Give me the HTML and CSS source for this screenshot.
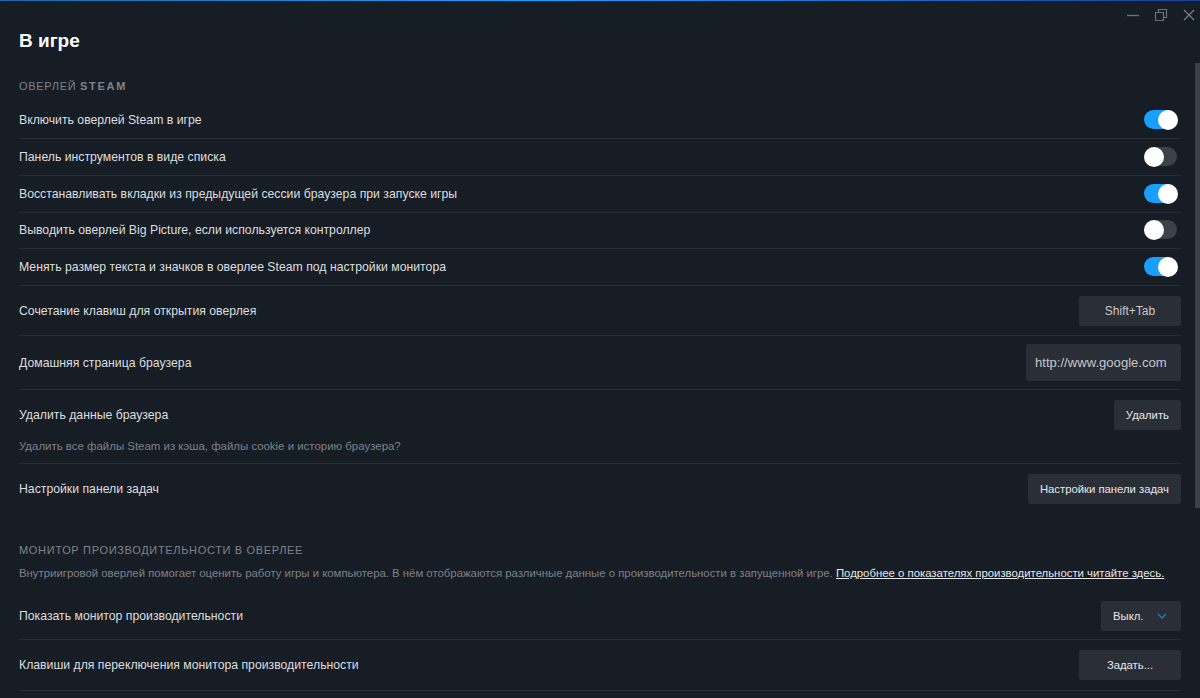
FILE: index.html
```html
<!DOCTYPE html>
<html lang="ru">
  <head>
    <meta charset="UTF-8" />
    <meta name="viewport" content="width=device-width, initial-scale=1.0" />
    <title>В игре</title>
    <link rel="stylesheet" href="styles.css">
  </head>
  <body>
    <div class="topLine"></div>
    <div class="windowButtons">
      <svg width="14" height="14" viewBox="0 0 14 14"><path d="M1 7.500h12" stroke="#6b7079" stroke-width="1.400" fill="none" /></svg>
      <svg width="14" height="14" viewBox="0 0 14 14"><path d="M1.500 4.500h8v8h-8zM4.500 4.500v-3h8v8h-3" stroke="#6b7079" stroke-width="1.200" fill="none" /></svg>
      <svg width="14" height="14" viewBox="0 0 14 14"><path d="M2 2l10 10M12 2l-10 10" stroke="#7b8088" stroke-width="1.200" fill="none" /></svg>
    </div>
    <div class="scrollThumb"></div>
    <div class="page">
      <h1 class="pageTitle">В игре</h1>

      <h2 class="sectionTitle">Оверлей <b>Steam</b></h2>
      <div class="row toggleRow">
        <p>Включить оверлей Steam в игре</p>
        <div class="toggle on"><span></span></div>
      </div>
      <div class="row toggleRow">
        <p>Панель инструментов в виде списка</p>
        <div class="toggle"><span></span></div>
      </div>
      <div class="row toggleRow">
        <p>Восстанавливать вкладки из предыдущей сессии браузера при запуске игры</p>
        <div class="toggle on"><span></span></div>
      </div>
      <div class="row toggleRow">
        <p>Выводить оверлей Big Picture, если используется контроллер</p>
        <div class="toggle"><span></span></div>
      </div>
      <div class="row toggleRow">
        <p>Менять размер текста и значков в оверлее Steam под настройки монитора</p>
        <div class="toggle on"><span></span></div>
      </div>
      <div class="row shortcutRow">
        <p>Сочетание клавиш для открытия оверлея</p>
        <div class="button wide">Shift+Tab</div>
      </div>
      <div class="row homeRow">
        <p>Домашняя страница браузера</p>
        <div class="urlField">http://www.google.com</div>
      </div>
      <div class="deleteRow">
        <div class="deleteTop">
          <p>Удалить данные браузера</p>
          <div class="button strong">Удалить</div>
        </div>
        <p class="hint">Удалить все файлы Steam из кэша, файлы cookie и историю браузера?</p>
      </div>
      <div class="row plainRow">
        <p>Настройки панели задач</p>
        <div class="button strong">Настройки панели задач</div>
      </div>

      <h2 class="sectionTitle second">Монитор производительности в оверлее</h2>
      <p class="hint intro">Внутриигровой оверлей помогает оценить работу игры и компьютера. В нём отображаются различные данные о производительности в запущенной игре. <a href="#">Подробнее о показателях производительности читайте здесь.</a></p>
      <div class="row monitorRow first">
        <p>Показать монитор производительности</p>
        <div class="button select strong">Выкл.
          <svg width="10" height="6" viewBox="0 0 10 6"><path d="M1 1l4 4 4-4" stroke="#1a7fc9" stroke-width="1.300" fill="none" /></svg>
        </div>
      </div>
      <div class="row monitorRow">
        <p>Клавиши для переключения монитора производительности</p>
        <div class="button wide strong">Задать...</div>
      </div>
    </div>
  </body>
</html>
```
FILE: styles.css
```css
html,
body {
  height: 698px;
  overflow: hidden;
}
body {
  margin: 0;
  background-color: #171d25;
  color: #dcdedf;
  font-family: "Liberation Sans", Arial, sans-serif;
  font-size: 12.25px;
}
p,
h1,
h2 {
  margin: 0;
}
.topLine {
  height: 1px;
  background: linear-gradient(to right, #1a6aa8, #1a9fff 45%, #1b3f9c);
}
.windowButtons {
  position: absolute;
  top: 8px;
  right: 4px;
  display: flex;
  gap: 14px;
}
.scrollThumb {
  position: absolute;
  top: 63px;
  right: 0;
  width: 5px;
  height: 445px;
  background-color: #3a3f48;
}
.page {
  padding: 0 19px;
}
.pageTitle {
  padding-top: 28px;
  font-size: 19px;
  line-height: 24px;
  color: #fff;
  font-weight: bold;
}
.sectionTitle {
  margin-top: 25px;
  margin-bottom: 8.25px;
  height: 16px;
  font-size: 11px;
  line-height: 16px;
  font-weight: normal;
  color: #7f8389;
  letter-spacing: 0.7px;
  text-transform: uppercase;
}
.sectionTitle b {
  letter-spacing: 1.7px;
}
.sectionTitle.second {
  margin-top: 29px;
  margin-bottom: 0;
  letter-spacing: 0.67px;
}
.row {
  box-sizing: border-box;
  display: flex;
  justify-content: space-between;
  align-items: center;
  border-bottom: 1px solid #2a2f37;
}
.toggleRow {
  height: 36.75px;
}
.shortcutRow {
  height: 50px;
}
.homeRow {
  height: 54px;
}
.plainRow {
  height: 49px;
  border-bottom: none;
}
.monitorRow {
  height: 51px;
}
.monitorRow.first {
  height: 50px;
  padding-top: 2px;
}
.toggle {
  width: 33px;
  height: 19px;
  margin-right: 4px;
  margin-bottom: 1px;
  border-radius: 10px;
  background-color: #3d4249;
  position: relative;
}
.toggle span {
  position: absolute;
  top: 0;
  left: 0;
  width: 20px;
  height: 20px;
  border-radius: 50%;
  background-color: #fff;
}
.toggle.on {
  background-color: #1a9fff;
}
.toggle.on span {
  left: 14px;
}
.button,
.urlField {
  display: flex;
  align-items: center;
  justify-content: center;
  height: 30px;
  background-color: #2a2e37;
  border-radius: 2px;
  font-size: 12px;
  color: #c6c8cb;
}
.button {
  padding: 0 12px;
}
.button.wide {
  width: 102px;
  padding: 0;
}
.button.strong {
  font-size: 11.300px;
  color: #e6e7e9;
}
.button.select {
  justify-content: flex-start;
  gap: 14px;
  width: 56px;
}
.urlField {
  justify-content: flex-start;
  box-sizing: border-box;
  width: 155px;
  height: 37px;
  padding-left: 9px;
  font-size: 13.100px;
}
.deleteRow {
  box-sizing: border-box;
  border-bottom: 1px solid #2a2f37;
  height: 74px;
}
.deleteTop {
  display: flex;
  justify-content: space-between;
  align-items: center;
  padding-top: 10px;
}
.hint {
  font-size: 11.450px;
  line-height: 13px;
  color: #7d8187;
  padding-top: 10px;
}
.intro {
  font-size: 11.360px;
  padding-top: 9px;
  height: 23px;
}
.intro a {
  color: #e6e7e9;
}
```
